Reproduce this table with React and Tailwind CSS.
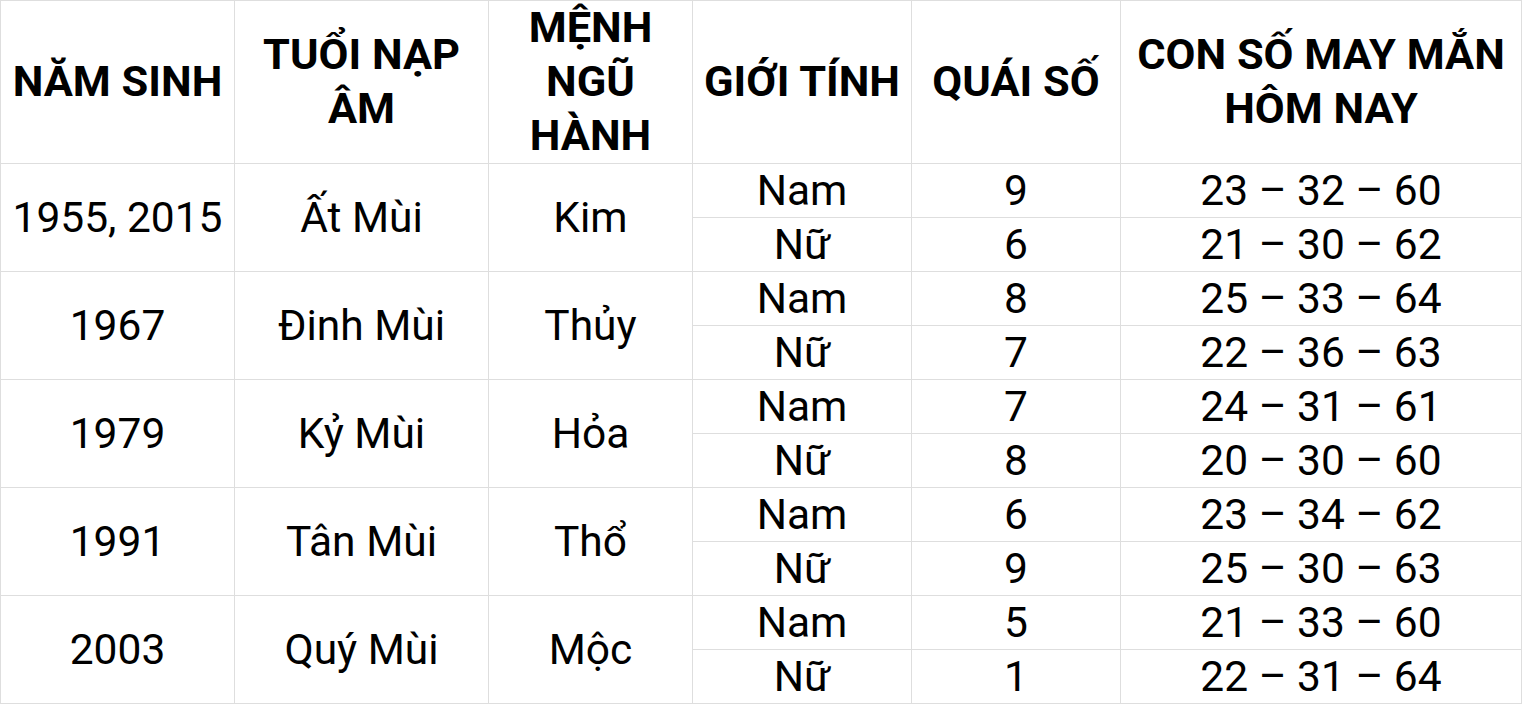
import React from "react";

const rows = [
  { year: "1955, 2015", tuoi: "Ất Mùi", menh: "Kim", nam: ["9", "23 – 32 – 60"], nu: ["6", "21 – 30 – 62"] },
  { year: "1967", tuoi: "Đinh Mùi", menh: "Thủy", nam: ["8", "25 – 33 – 64"], nu: ["7", "22 – 36 – 63"] },
  { year: "1979", tuoi: "Kỷ Mùi", menh: "Hỏa", nam: ["7", "24 – 31 – 61"], nu: ["8", "20 – 30 – 60"] },
  { year: "1991", tuoi: "Tân Mùi", menh: "Thổ", nam: ["6", "23 – 34 – 62"], nu: ["9", "25 – 30 – 63"] },
  { year: "2003", tuoi: "Quý Mùi", menh: "Mộc", nam: ["5", "21 – 33 – 60"], nu: ["1", "22 – 31 – 64"] },
];

const cell = "border border-[#dedede] text-center align-middle";
const th = cell + " p-0 font-bold text-[43.4px] leading-[54px]";
const td = cell + " px-0 pt-[2px] pb-0 text-[42.5px] leading-none";

export default function App() {
  return (
    <div className="w-[1528px] h-[705px] bg-white text-black overflow-hidden" style={{ fontFamily: "Roboto, sans-serif" }}>
      <table className="table-fixed border-collapse w-[1521px]">
        <colgroup>
          <col className="w-[234px]" />
          <col className="w-[254px]" />
          <col className="w-[204px]" />
          <col className="w-[219px]" />
          <col className="w-[209px]" />
          <col className="w-[401px]" />
        </colgroup>
        <thead>
          <tr className="h-[163px]">
            <th className={th}>NĂM SINH</th>
            <th className={th}>TUỔI NẠP<br />ÂM</th>
            <th className={th}>MỆNH<br />NGŨ<br />HÀNH</th>
            <th className={th}>GIỚI TÍNH</th>
            <th className={th}>QUÁI SỐ</th>
            <th className={th}>CON SỐ MAY MẮN<br />HÔM NAY</th>
          </tr>
        </thead>
        <tbody>
          {rows.map((r) => (
            <React.Fragment key={r.year}>
              <tr className="h-[54px]">
                <td rowSpan={2} className={td}>{r.year}</td>
                <td rowSpan={2} className={td}>{r.tuoi}</td>
                <td rowSpan={2} className={td}>{r.menh}</td>
                <td className={td}>Nam</td>
                <td className={td}>{r.nam[0]}</td>
                <td className={td}>{r.nam[1]}</td>
              </tr>
              <tr className="h-[54px]">
                <td className={td}>Nữ</td>
                <td className={td}>{r.nu[0]}</td>
                <td className={td}>{r.nu[1]}</td>
              </tr>
            </React.Fragment>
          ))}
        </tbody>
      </table>
    </div>
  );
}
